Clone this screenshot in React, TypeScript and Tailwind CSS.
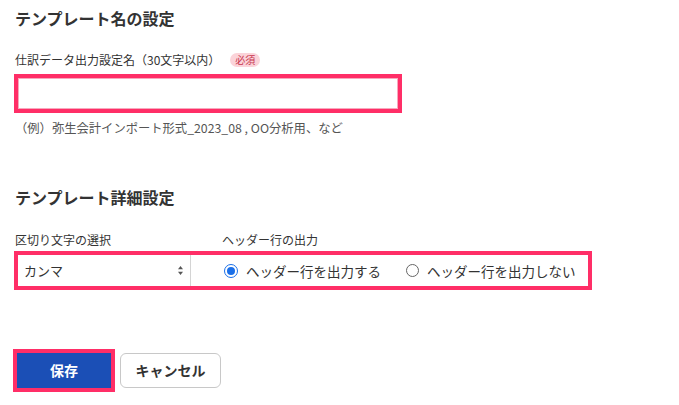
import { useState } from "react";

const font = { fontFamily: '"Noto Sans CJK JP", "Noto Sans", sans-serif' };

function Radio({ checked, label, onClick }: { checked: boolean; label: string; onClick: () => void }) {
  return (
    <button type="button" onClick={onClick} className="flex items-center gap-[8px] text-[13.5px] text-[#333]">
      {checked ? (
        <span className="flex h-[14px] w-[14px] items-center justify-center rounded-full border-[1.5px] border-[#1a6fe8] bg-white">
          <span className="h-[8px] w-[8px] rounded-full bg-[#1a6fe8]" />
        </span>
      ) : (
        <span className="h-[13px] w-[13px] rounded-full border border-[#666] bg-white" />
      )}
      <span className="leading-[20px]">{label}</span>
    </button>
  );
}

export default function App() {
  const [header, setHeader] = useState(true);

  return (
    <div className="min-h-[405px] w-[679px] bg-white px-[14px] pt-[6px] text-[#333]" style={font}>
      {/* テンプレート名 */}
      <h2 className="pl-[1px] text-[16px] font-bold leading-[24px] text-[#333]">テンプレート名の設定</h2>

      <div className="mt-[21px] flex items-center pl-[1px] text-[12px] leading-[18px]">
        <span>仕訳データ出力設定名（30文字以内）</span>
        <span className="ml-[10px] rounded-full bg-[#fbd3d9] px-[5px] text-[10px] leading-[14px] text-[#c8354e]">必須</span>
      </div>

      <div className="mt-[5px] h-[39px] w-[388px] border-4 border-[#ff2e67] bg-white">
        <input className="h-full w-full border border-[#f7a8bd] px-2 text-[13px] outline-none" />
      </div>

      <p className="mt-[6px] pl-[1px] text-[12.3px] leading-[18px] text-[#555]">
        （例）弥生会計インポート形式_2023_08 , OO分析用、など
      </p>

      {/* テンプレート詳細 */}
      <h2 className="mt-[48px] pl-[1px] text-[16px] font-bold leading-[24px] text-[#333]">テンプレート詳細設定</h2>

      <div className="mt-[22px] flex text-[12px] leading-[18px]">
        <span className="w-[208px] pl-[1px]">区切り文字の選択</span>
        <span>ヘッダー行の出力</span>
      </div>

      <div className="mt-[2px] flex h-[39px] w-[578px] border-4 border-[#ff2e67] bg-white">
        <div className="flex w-[173px] items-center justify-between border-r border-[#d4d4d4] pl-[6px] pr-[6px]">
          <span className="text-[13px]">カンマ</span>
          <svg width="7" height="11" viewBox="0 0 7 11" fill="#555">
            <path d="M3.5 1 L6 4.2 H1 Z" />
            <path d="M3.5 10 L6 6.8 H1 Z" />
          </svg>
        </div>
        <div className="flex items-center gap-[25px] pl-[33px]">
          <Radio checked={header} label="ヘッダー行を出力する" onClick={() => setHeader(true)} />
          <Radio checked={!header} label="ヘッダー行を出力しない" onClick={() => setHeader(false)} />
        </div>
      </div>

      {/* Actions */}
      <div className="mt-[59px] flex items-center gap-[5px]">
        <div className="-ml-[1px] border-4 border-[#ff2e67]">
          <button className="h-[35px] w-[94px] bg-[#1b4fb6] text-[14px] font-bold text-white">保存</button>
        </div>
        <button className="h-[35px] w-[101px] rounded-[6px] border border-[#c8c8c8] bg-white text-[14px] font-bold text-[#333]">
          キャンセル
        </button>
      </div>
    </div>
  );
}
